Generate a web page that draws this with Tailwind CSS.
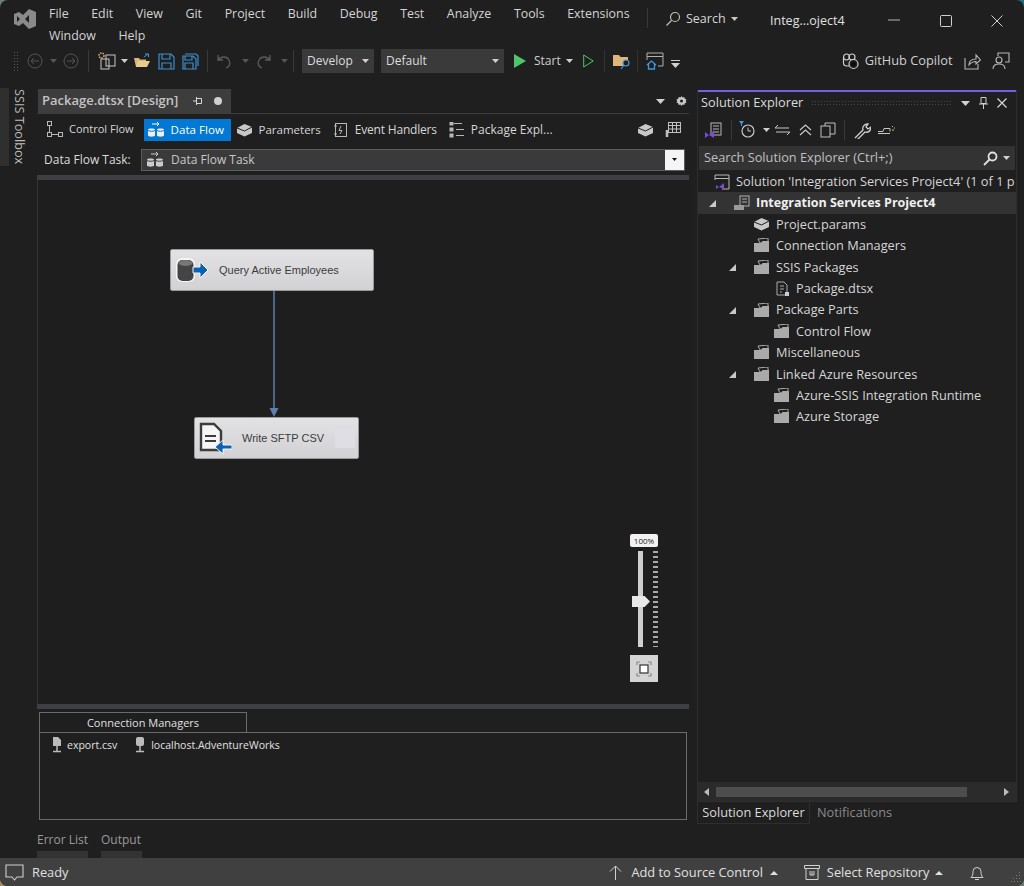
<!DOCTYPE html>
<html lang="en">
<head>
  <meta charset="UTF-8" />
  <title>Integration Services Project4 - Visual Studio</title>
  <script src="https://cdn.jsdelivr.net/npm/@tailwindcss/browser@4"></script>
</head>
<body class="bg-linear-to-tr from-[#a88a5c] to-[#1f6f80] w-[1024px] h-[886px] overflow-hidden font-['Open_Sans',sans-serif] text-[12px] text-[#d6d6d6]">
<div class="w-[1024px] h-[886px] flex flex-col bg-[#1f1f1f] rounded-[8px] overflow-hidden">

  <!-- title bar + menu -->
  <header class="h-[44px] flex shrink-0">
    <div class="w-[49px] flex pl-[14px] pt-[9px]">
      <svg class="w-[22px] h-[20px]" viewBox="0 0 22 20"><path d="M15 0l7 3v14l-7 3-6-6-4 3-5-2V5l5-2 4 3zM3 7v6l3-3zM15 6l-4 4 4 4z" fill="#8a8a8a" fill-rule="evenodd"/></svg>
    </div>
    <nav class="w-[598px] flex flex-wrap gap-x-[22.6px] content-start pt-[3px] leading-[21.5px] text-[12.4px] text-[#d4d4d4]">
      <span>File</span><span>Edit</span><span>View</span><span>Git</span><span>Project</span><span>Build</span><span>Debug</span><span>Test</span><span>Analyze</span><span>Tools</span><span>Extensions</span>
      <span>Window</span><span>Help</span>
    </nav>
    <div class="w-px h-[20px] mt-[8px] bg-[#3a3a3a]"></div>
    <div class="flex items-start pt-[9px] pl-[17px] w-[122px] gap-[5px] text-[12.5px]">
      <svg class="w-[16px] h-[16px] mt-[2px]" viewBox="0 0 16 16" fill="none" stroke="#bdbdbd" stroke-width="1.2"><circle cx="10" cy="6" r="4.5"/><path d="M6.5 9.5L1.5 14.5"/></svg>
      <span class="leading-[20px]">Search</span>
      <svg class="w-[7px] h-[4px] mt-[8px]" viewBox="0 0 7 4"><path d="M0 0h7L3.5 4z" fill="#c8c8c8"/></svg>
    </div>
    <div class="pt-[11px] w-[118px] leading-[20px] text-[12.5px] text-[#e0e0e0]">Integ...oject4</div>
    <div class="flex pt-[15px] text-[#cfcfcf]">
      <svg class="w-[12px] h-[12px]" viewBox="0 0 12 12"><path d="M0 5h12" stroke="#b5b5b5"/></svg>
      <svg class="w-[12px] h-[12px] ml-[40px]" viewBox="0 0 12 12" fill="none"><rect x=".5" y=".5" width="11" height="11" rx="1" stroke="#d0d0d0"/></svg>
      <svg class="w-[12px] h-[12px] ml-[39px]" viewBox="0 0 12 12"><path d="M.5.5l11 11M11.500.5l-11 11" stroke="#d0d0d0"/></svg>
    </div>
  </header>

  <!-- main toolbar -->
  <div class="h-[34px] flex items-center shrink-0 pl-[13px] relative">
    <div class="w-[6px] h-[20px] bg-[radial-gradient(#5a5a5a_0.8px,transparent_0.8px)] bg-[length:3px_3px]"></div>
    <svg class="w-[16px] h-[16px] ml-[8px]" viewBox="0 0 16 16" fill="none" stroke="#555"><circle cx="8" cy="8" r="7"/><path d="M12 8H4M7 5L4 8l3 3"/></svg>
    <svg class="w-[7px] h-[4px] ml-[7px]" viewBox="0 0 7 4"><path d="M0 0h7L3.5 4z" fill="#555"/></svg>
    <svg class="w-[16px] h-[16px] ml-[6px]" viewBox="0 0 16 16" fill="none" stroke="#555"><circle cx="8" cy="8" r="7"/><path d="M4 8h8M9 5l3 3-3 3"/></svg>
    <div class="w-px h-[22px] bg-[#3a3a3a] ml-[9px]"></div>
    <svg class="w-[18px] h-[18px] ml-[9px]" viewBox="0 0 18 18" fill="none"><rect x="3" y="7" width="8" height="10" stroke="#c8c8c8"/><rect x="8" y="3" width="9" height="11" stroke="#c8c8c8"/><circle cx="3.500" cy="3.500" r="2.500" stroke="#dcb67a" stroke-width="1.5" stroke-dasharray="1.500 1"/></svg>
    <svg class="w-[7px] h-[4px] ml-[5px]" viewBox="0 0 7 4"><path d="M0 0h7L3.500 4z" fill="#d0d0d0"/></svg>
    <svg class="w-[17px] h-[16px] ml-[6px]" viewBox="0 0 17 16"><path d="M0 5h5l1 1.500h6V14H2z" fill="#dcb67a"/><path d="M2 14l2-6h12l-3 6z" fill="#e8cc8f"/><path d="M10 4l4-3M11 1h3.500v3" stroke="#3c9ae0" fill="none"/></svg>
    <svg class="w-[17px] h-[17px] ml-[7px]" viewBox="0 0 17 17" fill="none" stroke="#3c8ed0" stroke-width="1.200"><path d="M1 1h12l3 3v12H1z"/><path d="M4 1v5h8V1M4 16v-6h9v6"/></svg>
    <svg class="w-[17px] h-[17px] ml-[7px]" viewBox="0 0 17 17" fill="none" stroke="#3c8ed0" stroke-width="1.200"><path d="M1 3h10l3 3v10H1z"/><path d="M3 3v4h7V3M3 16v-6h8v6M3 1h11l2 2v10"/></svg>
    <div class="w-px h-[22px] bg-[#3a3a3a] ml-[8px]"></div>
    <svg class="w-[15px] h-[15px] ml-[9px]" viewBox="0 0 15 15" fill="none" stroke="#5a5a5a" stroke-width="1.300"><path d="M1 1v5h5M1 6c3-4 9-4 11 0s0 7-3 8"/></svg>
    <svg class="w-[7px] h-[4px] ml-[10px]" viewBox="0 0 7 4"><path d="M0 0h7L3.500 4z" fill="#555"/></svg>
    <svg class="w-[15px] h-[15px] ml-[7px]" viewBox="0 0 15 15" fill="none" stroke="#5a5a5a" stroke-width="1.300"><path d="M14 1v5H9M14 6c-3-4-9-4-11 0s0 7 3 8"/></svg>
    <svg class="w-[7px] h-[4px] ml-[10px]" viewBox="0 0 7 4"><path d="M0 0h7L3.500 4z" fill="#555"/></svg>
    <div class="w-px h-[22px] bg-[#3a3a3a] ml-[5px]"></div>
    <div class="w-[72px] h-[24px] ml-[8px] bg-[#3a3a3a] flex items-center pl-[5px] text-[#dcdcdc]">Develop<svg class="w-[7px] h-[4px] ml-auto mr-[5px]" viewBox="0 0 7 4"><path d="M0 0h7L3.500 4z" fill="#d0d0d0"/></svg></div>
    <div class="w-[123px] h-[24px] ml-[7px] bg-[#3a3a3a] flex items-center pl-[5px] text-[#dcdcdc]">Default<svg class="w-[7px] h-[4px] ml-auto mr-[5px]" viewBox="0 0 7 4"><path d="M0 0h7L3.500 4z" fill="#d0d0d0"/></svg></div>
    <svg class="w-[12px] h-[14px] ml-[10px]" viewBox="0 0 12 14"><path d="M0 0l12 7-12 7z" fill="#4ec66a"/></svg>
    <span class="ml-[8px] text-[#cfcfcf]">Start</span>
    <svg class="w-[7px] h-[4px] ml-[5px]" viewBox="0 0 7 4"><path d="M0 0h7L3.500 4z" fill="#d0d0d0"/></svg>
    <svg class="w-[11px] h-[14px] ml-[10px]" viewBox="0 0 11 14" fill="none"><path d="M.7 1l9.500 6-9.500 6z" stroke="#4ec66a"/></svg>
    <div class="w-px h-[22px] bg-[#333] ml-[10px]"></div>
    <svg class="w-[18px] h-[17px] ml-[8px]" viewBox="0 0 18 17"><path d="M0 2h6l1.500 2H15v9H0z" fill="#dcb67a"/><circle cx="13" cy="10" r="3" fill="#1f1f1f" stroke="#3c9ae0" stroke-width="1.200"/><path d="M11 12l-3 4" stroke="#3c9ae0" stroke-width="1.200"/></svg>
    <div class="w-px h-[22px] bg-[#333] ml-[6px]"></div>
    <svg class="w-[18px] h-[18px] ml-[8px]" viewBox="0 0 18 18" fill="none"><path d="M1 8V1h16v13h-5M1 4.500h16" stroke="#b0b0b0"/><path d="M1 13l4.500-4 4.500 4M2.500 12v5h6v-5" stroke="#3c9ae0" stroke-width="1.300"/></svg>
    <svg class="w-[9px] h-[8px] ml-[7px] mt-[5px]" viewBox="0 0 9 8"><path d="M0 .5h9" stroke="#d0d0d0"/><path d="M0 3h9L4.500 8z" fill="#d0d0d0"/></svg>
    <svg class="w-[17px] h-[17px] ml-[162px]" viewBox="0 0 17 17" fill="none" stroke="#d0d0d0" stroke-width="1.200"><circle cx="4.500" cy="4" r="3"/><circle cx="10" cy="4" r="3"/><path d="M1.500 5v5c0 2 1.500 3 3.500 3h2M12.500 6v1"/><circle cx="11.500" cy="11" r="4.500" fill="#1f1f1f"/><circle cx="11.500" cy="11" r="2.400" fill="#0c0c0c" stroke="none"/></svg>
    <span class="ml-[6px] text-[12.8px] text-[#cfcfcf]">GitHub Copilot</span>
    <svg class="w-[17px] h-[17px] ml-[11px]" viewBox="0 0 17 17" fill="none" stroke="#b8b8b8" stroke-width="1.100"><path d="M1 5v11h13v-5M5 12c0-4 3-6 7-6V2l4.500 5-4.500 4V8.500c-3 0-5 1-7 3.500z"/></svg>
    <svg class="w-[18px] h-[18px] ml-[11px]" viewBox="0 0 18 18" fill="none" stroke="#b8b8b8" stroke-width="1.100"><path d="M6 4V1h11v9h-4"/><circle cx="7" cy="8" r="3"/><path d="M1 17c0-4 3-5 6-5s6 1 6 5"/></svg>
  </div>

  <!-- workspace -->
  <main class="flex-1 min-h-0 flex">
    <!-- left rail -->
    <div class="w-[37px] shrink-0 flex pt-[10px]">
      <div class="w-[9px] h-[78px] bg-[#2f2f2f]"></div>
      <div class="[writing-mode:vertical-lr] h-[80px] ml-[3px] mt-[1px] leading-[15px] text-[12.7px] whitespace-nowrap text-[#bcbcbc]">SSIS Toolbox</div>
    </div>

    <!-- designer column -->
    <section class="w-[652px] shrink-0 flex flex-col pt-[11px]">
      <div class="flex h-[24px] shrink-0 items-stretch ml-[1px]">
        <div class="w-[193px] bg-[#3d3d3d] flex items-center pl-[4px] font-semibold text-[13px] text-[#c4c4c4]">
          Package.dtsx [Design]
          <svg class="w-[10px] h-[10px] ml-auto" viewBox="0 0 10 10" fill="none" stroke="#d8d8d8"><path d="M0 5h3M3.500 1v8M3.500 2.500h5v5h-5"/></svg>
          <span class="w-[8px] h-[8px] rounded-full bg-[#cfcfcf] ml-[11px] mr-[9px]"></span>
        </div>
        <div class="flex-1 flex justify-end items-center pr-[2px]">
          <svg class="w-[9px] h-[5px]" viewBox="0 0 9 5"><path d="M0 0h9L4.500 5z" fill="#d0d0d0"/></svg>
          <svg class="w-[11px] h-[11px] ml-[11px]" viewBox="0 0 11 11"><path d="M5.500 0l1 1.500 1.800-.5.500 1.800 1.700.7-.7 1.500.7 1.500-1.700.7-.5 1.800-1.800-.5-1 1.500-1-1.500-1.800.5-.5-1.800L.5 6.500 1.200 5 .5 3.500l1.700-.7.500-1.800 1.800.5z" fill="#c8c8c8"/><circle cx="5.500" cy="5" r="1.500" fill="#1f1f1f"/></svg>
        </div>
      </div>
      <div class="border-t border-[#3d3d3d] h-[32px] shrink-0 flex items-center pl-[9px] text-[#d6d6d6]">
        <svg class="w-[18px] h-[17px]" viewBox="0 0 18 17" fill="none" stroke="#b8b8b8"><rect x="1.500" y=".5" width="4" height="4"/><rect x="1.500" y="11.500" width="4" height="4"/><rect x="12.500" y="11.500" width="4" height="4"/><path d="M3.500 5v6M6 13.500h6"/></svg>
        <span class="ml-[5px] text-[11px]">Control Flow</span>
        <div class="ml-[10px] w-[87px] h-[22px] bg-[#0078d4] flex items-center pl-[3px] text-white text-[11.6px]">
          <svg class="w-[18px] h-[17px]" viewBox="0 0 18 17"><path d="M5 3h7M10 1l2 2-2 2" stroke="#fff" fill="none"/><path d="M1 8.500c0-1.500 7-1.500 7 0v6c0 1.500-7 1.500-7 0zM10 8.500c0-1.500 7-1.500 7 0v6c0 1.500-7 1.500-7 0z" fill="#eee"/><path d="M1 9.500c1 1 6 1 7 0M10 9.500c1 1 6 1 7 0" stroke="#0078d4" fill="none"/></svg>
          <span class="ml-[6px]">Data Flow</span>
        </div>
        <svg class="w-[17px] h-[14px] ml-[5px]" viewBox="0 0 17 14"><path d="M8.500 1L16 4v6l-7.500 3.500L1 10V5z" fill="#c8c8c8"/><path d="M1 5l7.500 3L16 4" stroke="#1f1f1f" fill="none"/></svg>
        <span class="ml-[6px] text-[11.5px]">Parameters</span>
        <svg class="w-[15px] h-[16px] ml-[12px]" viewBox="0 0 15 16" fill="none" stroke="#b8b8b8"><rect x="2.500" y="1.500" width="11" height="13"/><path d="M1 4h3M1 12h3M8 4L6 8.500h3L7 12"/></svg>
        <span class="ml-[7px] tracking-[-0.2px]">Event Handlers</span>
        <svg class="w-[16px] h-[16px] ml-[12px]" viewBox="0 0 16 16" fill="none" stroke="#b8b8b8"><path d="M5 1.500h8M7 7.500h8M7 13.500h8"/><rect x="1" y="6" width="3" height="3" fill="#b8b8b8"/><rect x="1" y="12" width="3" height="3" fill="#b8b8b8"/><rect x="1" y="0" width="3" height="3" fill="#b8b8b8"/></svg>
        <span class="ml-[6px]">Package Expl...</span>
        <svg class="w-[17px] h-[14px] ml-auto" viewBox="0 0 17 14"><path d="M8.500 1L16 4v6l-7.500 3.500L1 10V5z" fill="#c8c8c8"/><path d="M1 5l7.500 3L16 4" stroke="#1f1f1f" fill="none"/></svg>
        <svg class="w-[16px] h-[16px] ml-[11px] mr-[8px]" viewBox="0 0 16 16" fill="none" stroke="#c0c0c0"><rect x="3.500" y=".5" width="12" height="10"/><path d="M3.500 3.500h12M3.500 7h12M7.500 1v10M11.500 1v10"/><path d="M2 8v7" stroke-width="2.500"/></svg>
      </div>
      <div class="h-[30px] shrink-0 flex items-center pl-[7px] pb-[1px]">
        <span class="w-[97px] text-[#dcdcdc]">Data Flow Task:</span>
        <div class="w-[544px] h-[22px] bg-[#3a3a3a] border border-[#5c5c5c] flex items-center pl-[4px] text-[#c8c8c8]">
          <svg class="w-[18px] h-[17px]" viewBox="0 0 18 17"><path d="M5 3h7M10 1l2 2-2 2" stroke="#ccc" fill="none"/><path d="M1 8.500c0-1.500 7-1.500 7 0v6c0 1.500-7 1.500-7 0zM10 8.500c0-1.500 7-1.500 7 0v6c0 1.500-7 1.500-7 0z" fill="#ccc"/><path d="M1 9.500c1 1 6 1 7 0M10 9.500c1 1 6 1 7 0" stroke="#3a3a3a" fill="none"/></svg>
          <span class="ml-[7px]">Data Flow Task</span>
          <div class="ml-auto w-[19px] h-[20px] bg-[#f5f5f5] flex items-center justify-center">
            <svg class="w-[5px] h-[3px]" viewBox="0 0 5 3"><path d="M0 0h5L2.500 3z" fill="#111"/></svg>
          </div>
        </div>
      </div>
      <div class="h-[5px] bg-[#3c3f44] shrink-0"></div>

      <!-- data flow canvas -->
      <div class="h-[524px] shrink-0 relative bg-[#1e1e1e] border-l border-[#333]">
        <div class="absolute left-[132px] top-[69px] w-[204px] h-[42px] rounded-[2px] bg-linear-to-b from-[#e2e2e4] to-[#d2d2d4] flex items-center text-[#3c3c3c] font-['Liberation_Sans',sans-serif] text-[11px] border border-[#9a9a9a]">
          <svg class="w-[33px] h-[26px] ml-[5px]" viewBox="0 0 33 26"><rect x="0" y="1" width="19" height="24" rx="6" fill="#f5f5f5"/><rect x="1.500" y="3" width="16" height="21" rx="5" fill="#444"/><ellipse cx="9.500" cy="6" rx="7" ry="3" fill="#777"/><path d="M17 10h7V5l8 8-8 8v-5h-7z" fill="#0b62b0" stroke="#f5f5f5"/></svg>
          <span class="ml-[10px]">Query Active Employees</span>
        </div>
        <svg class="absolute left-[230px] top-[111px] w-[12px] h-[127px]" viewBox="0 0 12 127"><path d="M6 0v117" stroke="#5b7fae" stroke-width="1.500"/><path d="M1.500 117h9L6 126z" fill="#5b7fae"/></svg>
        <div class="absolute left-[156px] top-[237px] w-[165px] h-[42px] rounded-[2px] bg-linear-to-b from-[#e2e2e4] to-[#d2d2d4] flex items-center text-[#3c3c3c] font-['Liberation_Sans',sans-serif] text-[11px] border border-[#9a9a9a]">
          <svg class="w-[34px] h-[32px] ml-[3px]" viewBox="0 0 34 32"><path d="M3 2h13l7 7v19H3z" fill="#f5f5f5" stroke="#3c3c3c" stroke-width="2.400"/><path d="M7 14h11M7 19h11" stroke="#3c3c3c" stroke-width="1.800"/><path d="M34 23h-9v-5l-8 7 8 7v-5h9z" fill="#0b62b0" stroke="#f5f5f5"/></svg>
          <span class="ml-[10px]">Write SFTP CSV</span>
          <div class="ml-auto mr-[3px] w-[20px] h-[20px] bg-[#dedee4]"></div>
        </div>

        <!-- zoom control -->
        <div class="absolute left-[592px] top-[354px] w-[28px] h-[13px] bg-[#f2f2f2] rounded-[2px] text-[8px] leading-[13px] text-center text-[#222]">100%</div>
        <div class="absolute left-[600px] top-[371px] w-[5px] h-[96px] bg-[#cfcfcf]"></div>
        <div class="absolute left-[594px] top-[416px] w-[18px] h-[11px] bg-[#e8e8e8] [clip-path:polygon(0_0,70%_0,100%_50%,70%_100%,0_100%)]"></div>
        <div class="absolute left-[615px] top-[371px] w-[5px] h-[96px] bg-[repeating-linear-gradient(180deg,#aaa_0,#aaa_2px,transparent_2px,transparent_5px)]"></div>
        <div class="absolute left-[592px] top-[475px] w-[28px] h-[27px] bg-[#d4d4d4] flex items-center justify-center">
          <svg class="w-[16px] h-[16px]" viewBox="0 0 16 16" fill="none"><path d="M1 4V1h3M12 1h3v3M15 12v3h-3M4 15H1v-3" stroke="#8a8a8a" stroke-width="1.200"/><rect x="4" y="4" width="8" height="8" fill="#fff" stroke="#333" stroke-width="1.200"/></svg>
        </div>
      </div>
      <div class="h-[5px] bg-[#3c3f44] shrink-0"></div>

      <!-- connection managers -->
      <div class="pl-[2px] pr-[2px] pt-[3px] shrink-0">
        <div class="w-[208px] h-[20px] border border-b-0 border-[#6a6a6a] text-center text-[11px] leading-[19px] text-[#e0e0e0]">Connection Managers</div>
        <div class="h-[88px] border border-[#6a6a6a] flex items-start pt-[3px] pl-[11px] text-[10.500px] text-[#e0e0e0]">
          <svg class="w-[12px] h-[18px]" viewBox="0 0 12 18"><path d="M2 1h5l3 3v6H2z" fill="#bbb"/><path d="M6 10v5M2 15.500h8" stroke="#bbb" stroke-width="1.500"/></svg>
          <span class="ml-[4px] leading-[18px]">export.csv</span>
          <svg class="w-[12px] h-[18px] ml-[17px]" viewBox="0 0 12 18"><rect x="2" y="1" width="8" height="9" rx="2" fill="#bbb"/><path d="M6 10v5M2 15.500h8" stroke="#bbb" stroke-width="1.500"/></svg>
          <span class="ml-[5px] leading-[18px]">localhost.AdventureWorks</span>
        </div>
      </div>

      <!-- bottom tabs -->
      <div class="flex-1 flex text-[#9a9a9a] gap-[13px] pt-[10px]">
        <div class="flex flex-col w-[51px]"><span class="leading-[20px] whitespace-nowrap">Error List</span><div class="mt-auto h-[7px] bg-[#333]"></div></div>
        <div class="flex flex-col w-[41px]"><span class="leading-[20px]">Output</span><div class="mt-auto h-[7px] bg-[#333]"></div></div>
      </div>
    </section>

    <!-- solution explorer -->
    <aside class="w-[320px] ml-[8px] shrink-0 flex flex-col pt-[12px] pb-[34px] text-[12.75px]">
      <div class="flex-1 min-h-0 flex flex-col border-x border-b border-[#2e2e2e]">
        <div class="h-[24px] border-t-2 border-[#7160e8] flex items-center pl-[3px] text-[#dcdcdc] shrink-0">
          Solution Explorer
          <div class="ml-[8px] flex-1 h-[6px] bg-[radial-gradient(#4a4a4a_0.7px,transparent_0.7px)] bg-[length:3px_3px]"></div>
          <svg class="w-[9px] h-[5px] ml-[8px]" viewBox="0 0 9 5"><path d="M0 0h9L4.500 5z" fill="#d0d0d0"/></svg>
          <svg class="w-[9px] h-[12px] ml-[9px]" viewBox="0 0 9 12"><path d="M2 .5h5v6H2zM0 7h9M4.500 7v5" stroke="#d0d0d0" fill="none"/></svg>
          <svg class="w-[10px] h-[10px] ml-[9px] mr-[9px]" viewBox="0 0 10 10"><path d="M.5.5l9 9M9.500.5l-9 9" stroke="#d8d8d8" stroke-width="1.200"/></svg>
        </div>
        <div class="h-[32px] flex items-center pl-[6px] shrink-0">
          <svg class="w-[18px] h-[17px]" viewBox="0 0 18 17" fill="none"><rect x="7" y="1" width="10" height="12" stroke="#b8b8b8"/><path d="M9 4h6M9 7h6M9 10h6" stroke="#b8b8b8"/><path d="M1 10l4 3 5-5v8l-5-3-4 3z" fill="#7a4ad8"/></svg>
          <div class="w-px h-[20px] bg-[#3a3a3a] ml-[9px]"></div>
          <svg class="w-[16px] h-[18px] ml-[7px]" viewBox="0 0 16 18" fill="none"><path d="M0 0h5L3 3v2H2V3z" fill="#3c9ae0"/><circle cx="9" cy="10" r="6" stroke="#c8c8c8" stroke-width="1.200"/><path d="M9 6.500V10h3" stroke="#c8c8c8"/></svg>
          <svg class="w-[7px] h-[4px] ml-[8px]" viewBox="0 0 7 4"><path d="M0 0h7L3.500 4z" fill="#d0d0d0"/></svg>
          <svg class="w-[15px] h-[12px] ml-[5px]" viewBox="0 0 15 12" fill="none" stroke="#c8c8c8"><path d="M0 4h14M3 1L0 4M15 8H1M12 11l3-3"/></svg>
          <svg class="w-[13px] h-[12px] ml-[9px]" viewBox="0 0 13 12" fill="none" stroke="#c8c8c8" stroke-width="1.200"><path d="M1 6l5.500-5L12 6M1 11l5.500-5L12 11"/></svg>
          <svg class="w-[16px] h-[16px] ml-[8px]" viewBox="0 0 16 16" fill="none" stroke="#c0c0c0"><rect x="1" y="4" width="9" height="11"/><path d="M5 4V1h10v11h-5"/></svg>
          <div class="w-px h-[20px] bg-[#3a3a3a] ml-[8px]"></div>
          <svg class="w-[17px] h-[17px] ml-[9px]" viewBox="0 0 17 17" fill="none" stroke="#d0d0d0" stroke-width="1.300"><path d="M1 16l8-8c-1-3 1-6 5-6l-2 3 2 2 3-2c0 4-3 6-6 5l-8 8"/></svg>
          <svg class="w-[18px] h-[12px] ml-[7px]" viewBox="0 0 18 12" fill="none"><path d="M0 7.500h5l1-3h6v3M0 9.500h12" stroke="#c8c8c8"/><path d="M14 2l1 1M14 6h2M16 4h1" stroke="#dcb67a"/></svg>
        </div>
        <div class="h-[24px] mx-[1px] bg-[#333] flex items-center pl-[5px] text-[#c0c0c0] shrink-0">
          Search Solution Explorer (Ctrl+;)
          <svg class="w-[15px] h-[15px] ml-auto" viewBox="0 0 15 15" fill="none" stroke="#e0e0e0" stroke-width="1.800"><circle cx="9.500" cy="5.500" r="4"/><path d="M6.500 8.500L1 14"/></svg>
          <svg class="w-[7px] h-[4px] ml-[5px] mr-[5px]" viewBox="0 0 7 4"><path d="M0 0h7L3.500 4z" fill="#d0d0d0"/></svg>
        </div>

        <!-- tree -->
        <ul class="flex-1 min-h-0 pt-[1px] leading-[21.400px] text-[#d6d6d6] overflow-hidden whitespace-nowrap">
          <li class="h-[21.400px] flex items-center pl-[16px]">
            <svg class="w-[16px] h-[16px]" viewBox="0 0 16 16" fill="none"><path d="M1 6V1h14v14H8M1 4.500h14" stroke="#b8b8b8"/><path d="M2 11l3 2 5-4v6l-5-2-3 2z" fill="#7a4ad8"/></svg>
            <span class="ml-[6px]">Solution 'Integration Services Project4' (1 of 1 p</span>
          </li>
          <li class="h-[21.400px] flex items-center pl-[11px] bg-[#333] font-bold text-[12.5px] text-[#f0f0f0]">
            <svg class="w-[7px] h-[7px]" viewBox="0 0 7 7"><path d="M7 0v7H0z" fill="#c8c8c8"/></svg>
            <svg class="w-[18px] h-[18px] ml-[17px]" viewBox="0 0 18 18" fill="none"><rect x="7" y="2" width="9" height="10" stroke="#b0b0b0"/><path d="M9 5h5M9 8h5" stroke="#b0b0b0"/><path d="M1 11h10v5H1z" fill="#9a9a9a"/></svg>
            <span class="ml-[5px]">Integration Services Project4</span>
          </li>
          <li class="h-[21.400px] flex items-center pl-[55px]">
            <svg class="w-[17px] h-[14px]" viewBox="0 0 17 14"><path d="M8.500 1L16 4v6l-7.500 3.500L1 10V5z" fill="#c8c8c8"/><path d="M1 5l7.500 3L16 4" stroke="#1f1f1f" fill="none"/></svg>
            <span class="ml-[6px]">Project.params</span>
          </li>
          <li class="h-[21.400px] flex items-center pl-[55px]">
            <svg class="w-[17px] h-[15px]" viewBox="0 0 17 15"><path d="M5 1l10-1v5H7z" fill="none" stroke="#aaa"/><path d="M1 5h7l1.500-2H16v11H1z" fill="#aaa"/></svg>
            <span class="ml-[6px]">Connection Managers</span>
          </li>
          <li class="h-[21.400px] flex items-center pl-[31px]">
            <svg class="w-[7px] h-[7px]" viewBox="0 0 7 7"><path d="M7 0v7H0z" fill="#c8c8c8"/></svg>
            <svg class="w-[17px] h-[15px] ml-[17px]" viewBox="0 0 17 15"><path d="M5 1l10-1v5H7z" fill="none" stroke="#aaa"/><path d="M1 5h7l1.500-2H16v11H1z" fill="#aaa"/></svg>
            <span class="ml-[6px]">SSIS Packages</span>
          </li>
          <li class="h-[21.400px] flex items-center pl-[77px]">
            <svg class="w-[15px] h-[16px]" viewBox="0 0 15 16" fill="none"><path d="M2 1h7l3 3v10H2z" stroke="#aaa"/><path d="M5 5h4M5 8h4M5 11h2" stroke="#aaa"/><rect x="10" y="11" width="4" height="4" fill="#ccc"/></svg>
            <span class="ml-[6px]">Package.dtsx</span>
          </li>
          <li class="h-[21.400px] flex items-center pl-[31px]">
            <svg class="w-[7px] h-[7px]" viewBox="0 0 7 7"><path d="M7 0v7H0z" fill="#c8c8c8"/></svg>
            <svg class="w-[17px] h-[15px] ml-[17px]" viewBox="0 0 17 15"><path d="M5 1l10-1v5H7z" fill="none" stroke="#aaa"/><path d="M1 5h7l1.500-2H16v11H1z" fill="#aaa"/></svg>
            <span class="ml-[6px]">Package Parts</span>
          </li>
          <li class="h-[21.400px] flex items-center pl-[75px]">
            <svg class="w-[17px] h-[15px]" viewBox="0 0 17 15"><path d="M5 1l10-1v5H7z" fill="none" stroke="#aaa"/><path d="M1 5h7l1.500-2H16v11H1z" fill="#aaa"/></svg>
            <span class="ml-[6px]">Control Flow</span>
          </li>
          <li class="h-[21.400px] flex items-center pl-[55px]">
            <svg class="w-[17px] h-[15px]" viewBox="0 0 17 15"><path d="M5 1l10-1v5H7z" fill="none" stroke="#aaa"/><path d="M1 5h7l1.500-2H16v11H1z" fill="#aaa"/></svg>
            <span class="ml-[6px]">Miscellaneous</span>
          </li>
          <li class="h-[21.400px] flex items-center pl-[31px]">
            <svg class="w-[7px] h-[7px]" viewBox="0 0 7 7"><path d="M7 0v7H0z" fill="#c8c8c8"/></svg>
            <svg class="w-[17px] h-[15px] ml-[17px]" viewBox="0 0 17 15"><path d="M5 1l10-1v5H7z" fill="none" stroke="#aaa"/><path d="M1 5h7l1.500-2H16v11H1z" fill="#aaa"/></svg>
            <span class="ml-[6px]">Linked Azure Resources</span>
          </li>
          <li class="h-[21.400px] flex items-center pl-[75px]">
            <svg class="w-[17px] h-[15px]" viewBox="0 0 17 15"><path d="M5 1l10-1v5H7z" fill="none" stroke="#aaa"/><path d="M1 5h7l1.500-2H16v11H1z" fill="#aaa"/></svg>
            <span class="ml-[6px]">Azure-SSIS Integration Runtime</span>
          </li>
          <li class="h-[21.400px] flex items-center pl-[75px]">
            <svg class="w-[17px] h-[15px]" viewBox="0 0 17 15"><path d="M5 1l10-1v5H7z" fill="none" stroke="#aaa"/><path d="M1 5h7l1.500-2H16v11H1z" fill="#aaa"/></svg>
            <span class="ml-[6px]">Azure Storage</span>
          </li>
        </ul>

        <!-- horizontal scrollbar -->
        <div class="h-[19px] flex items-center shrink-0 bg-[#2b2b2b]">
          <svg class="w-[5px] h-[8px] ml-[6px]" viewBox="0 0 5 8"><path d="M5 0v8L0 4z" fill="#bbb"/></svg>
          <div class="w-[251px] h-[10px] bg-[#4d4d4d] ml-[7px]"></div>
          <svg class="w-[5px] h-[8px] ml-auto mr-[7px]" viewBox="0 0 5 8"><path d="M0 0v8l5-4z" fill="#bbb"/></svg>
        </div>
      </div>
      <div class="flex h-[22px] shrink-0">
        <div class="w-[113px] border-x border-b border-[#2e2e2e] flex items-center justify-center text-[#dcdcdc]">Solution Explorer</div>
        <div class="pl-[7px] flex items-center text-[#8a8a8a]">Notifications</div>
      </div>
    </aside>
  </main>

  <!-- status bar -->
  <footer class="h-[28px] bg-[#404040] flex items-center shrink-0 pl-[5px] pt-[1px] text-[12.8px] text-[#e0e0e0]">
    <svg class="w-[19px] h-[18px]" viewBox="0 0 19 18" fill="none"><path d="M1 1h17v12h-6l-2.500 3L7 13H1z" stroke="#d0d0d0" stroke-width="1.100"/></svg>
    <span class="ml-[8px]">Ready</span>
    <svg class="w-[13px] h-[15px] ml-[541px]" viewBox="0 0 13 15" fill="none"><path d="M6.500 15V1M1 6.500L6.500 1 12 6.500" stroke="#d0d0d0"/></svg>
    <span class="ml-[9px]">Add to Source Control</span>
    <svg class="w-[8px] h-[4px] ml-[7px]" viewBox="0 0 8 4"><path d="M0 4h8L4 0z" fill="#e0e0e0"/></svg>
    <svg class="w-[16px] h-[15px] ml-[26px]" viewBox="0 0 16 15" fill="none" stroke="#d0d0d0"><path d="M.5.5h15v3H.5zM2 3.500V14.500h12v-11M6 6v4h4V6M8 6v4"/></svg>
    <span class="ml-[7px]">Select Repository</span>
    <svg class="w-[8px] h-[4px] ml-[6px]" viewBox="0 0 8 4"><path d="M0 4h8L4 0z" fill="#e0e0e0"/></svg>
    <svg class="w-[14px] h-[16px] ml-[27px]" viewBox="0 0 14 16" fill="none" stroke="#d0d0d0"><path d="M1 12.500c1.500-1.500 2-3 2-6a4 4 0 0 1 8 0c0 3 .5 4.500 2 6zM5 14.500h4"/></svg>
    <svg class="w-[10px] h-[10px] ml-auto mr-[3px] mt-[8px]" viewBox="0 0 10 10" fill="#7a7a7a"><path d="M8 0h1v1H8zM5 3h1v1H5zM8 3h1v1H8zM2 6h1v1H2zM5 6h1v1H5zM8 6h1v1H8zM0 9h1v1H0zM3 9h1v1H3zM6 9h1v1H6zM9 9h1v1H9z"/></svg>
  </footer>
</div>
</body>
</html>
